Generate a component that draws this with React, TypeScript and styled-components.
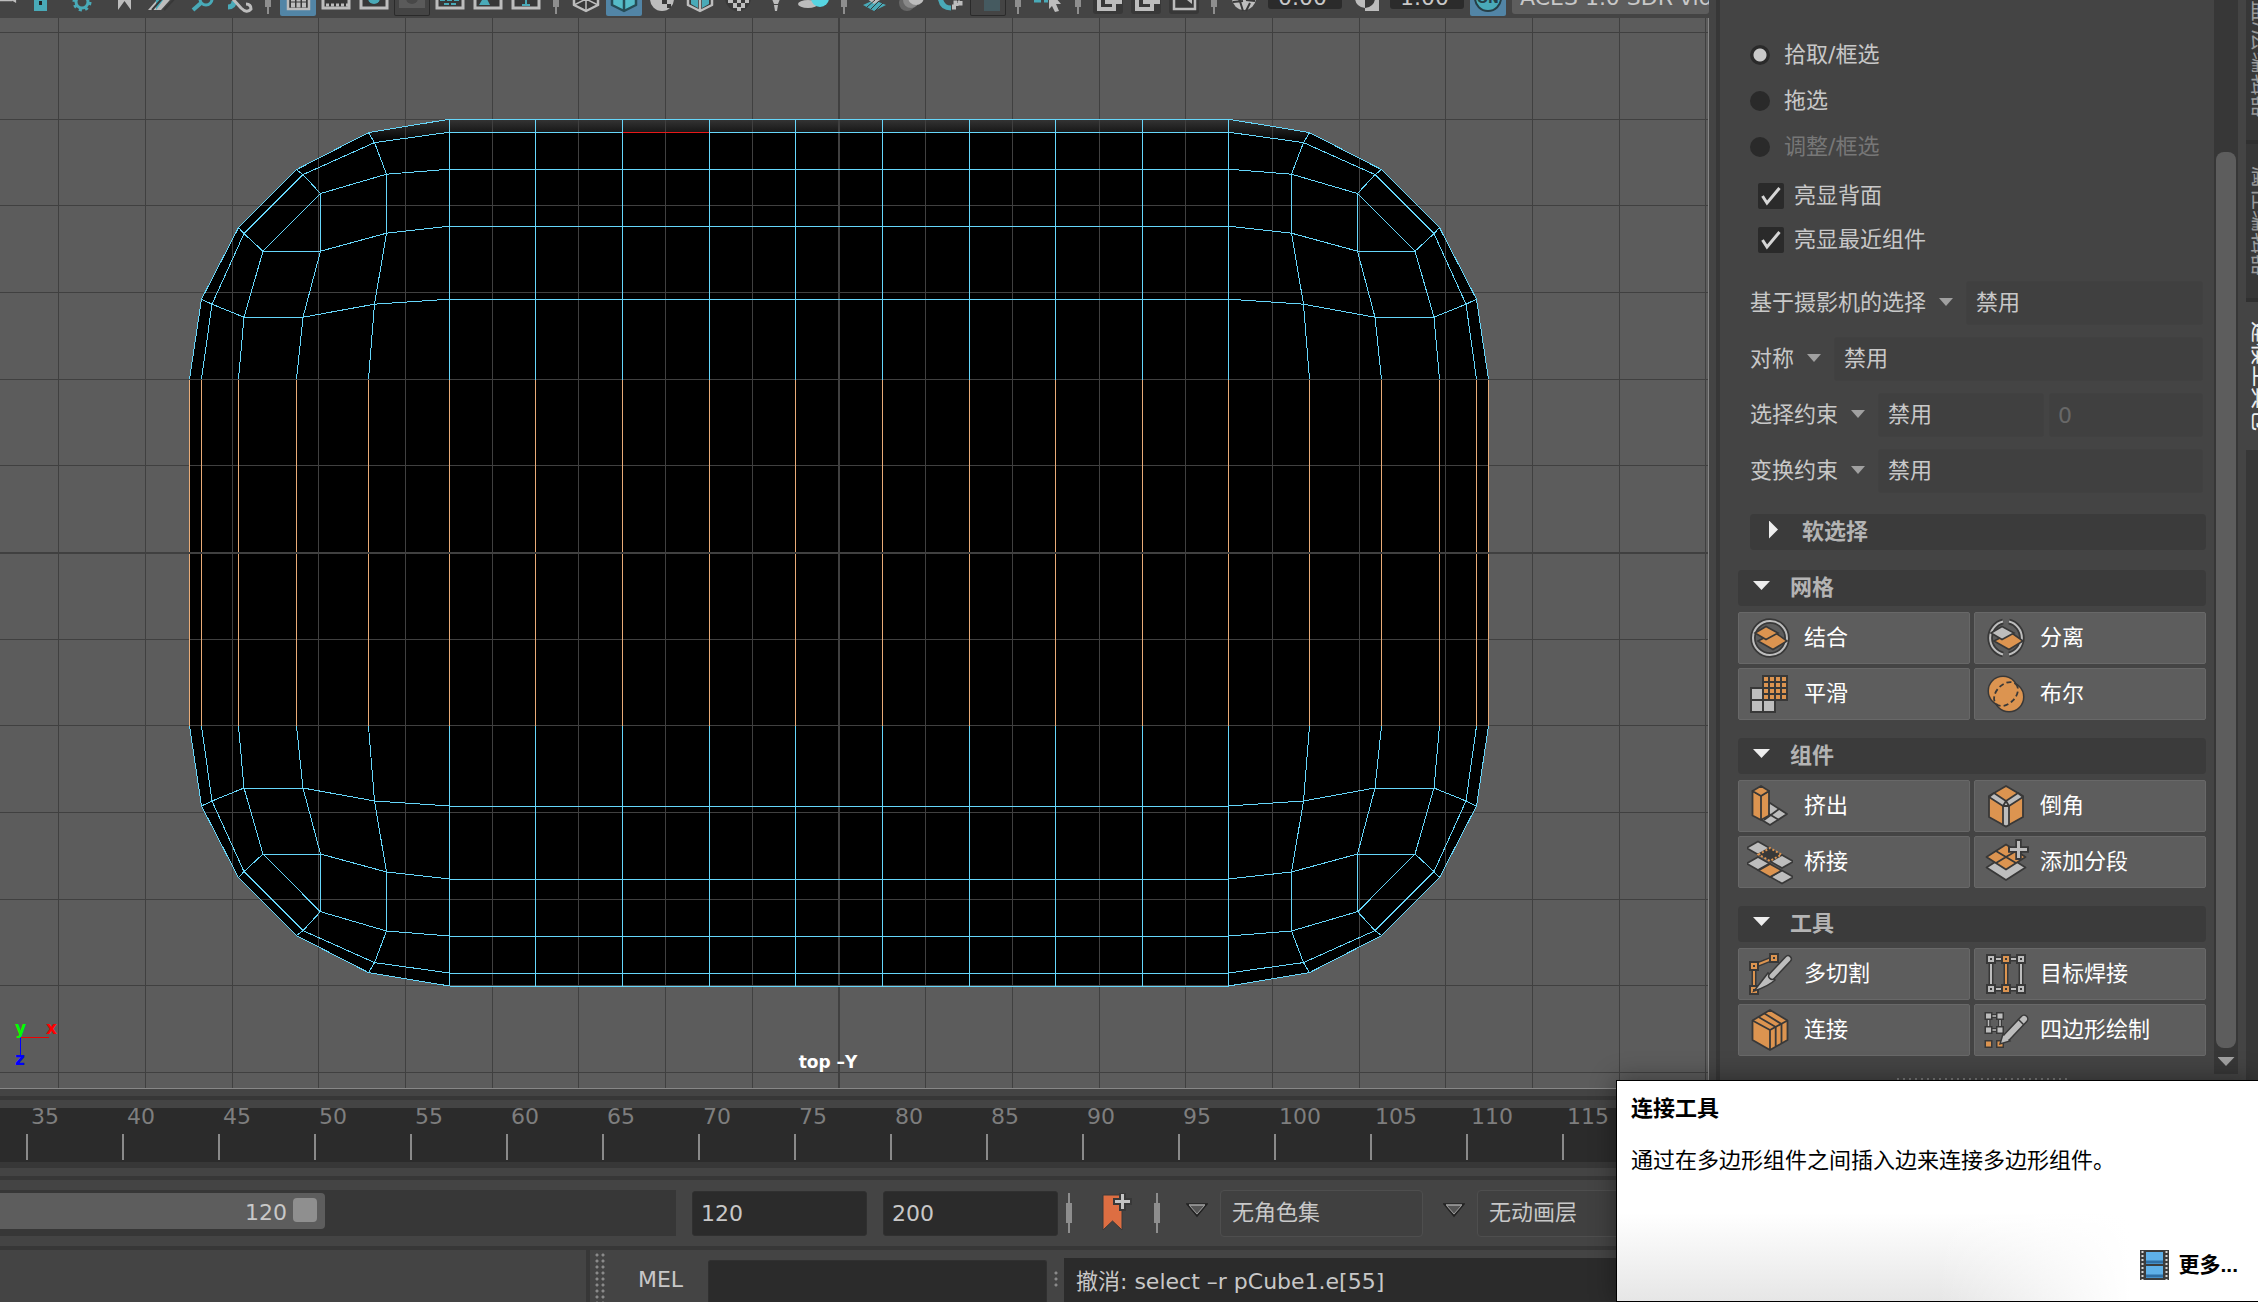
import React from "react";
import styled, { createGlobalStyle } from "styled-components";

const C = {
  panel: "#444444",
  groove: "#373737",
  well: "#2b2b2b",
  raised: "#5d5d5d",
  text: "#c8c8c8",
  teal: "#49aab8",
  blue: "#5285a6",
  light: "#bdbdbd",
  orange: "#dc9450",
  ink: "#383838",
};

const GlobalStyle = createGlobalStyle`
  * { box-sizing: border-box; }
  body { margin: 0; background: ${C.panel}; }
  body, button, input, select {
    font-family: "DejaVu Sans", "Noto Sans CJK SC", sans-serif;
    font-size: 22px;
    line-height: 28px;
    color: ${C.text};
  }
  button, input, select { margin: 0; padding: 0; border: 0; appearance: none; background: none; outline: none; }
`;

const Page = styled.div`
  position: relative;
  display: flex;
  flex-direction: column;
  height: 100vh;
  overflow: hidden;
`;
const Workspace = styled.div`
  display: flex;
  flex: 1;
  min-height: 0;
`;
const ViewColumn = styled.main`
  display: flex;
  flex-direction: column;
  flex: 1;
  min-width: 0;
  padding-bottom: 7px;
`;

/* ---------- viewport toolbar ---------- */
const Toolbar = styled.div`
  display: flex;
  align-items: flex-end;
  gap: 2px;
  height: 18px;
  padding-bottom: 2px;
  overflow: hidden;
  flex: none;
`;
const ToolButton = styled.button<{ $active?: boolean; $outlined?: boolean; $width?: number }>`
  display: flex;
  justify-content: center;
  flex: none;
  width: ${(p) => p.$width ?? 36}px;
  height: 36px;
  border-radius: 2px;
  background: ${(p) => (p.$active ? C.blue : "transparent")};
  box-shadow: ${(p) => (p.$outlined ? "inset 0 0 0 1px #2a2a2a" : "none")};
`;
const ToolIcon = styled.svg`
  display: block;
  width: 36px;
  height: 36px;
`;
const Divider = styled.span<{ $tall?: boolean }>`
  flex: none;
  align-self: ${(p) => (p.$tall ? "center" : "flex-end")};
  width: ${(p) => (p.$tall ? 6 : 20)}px;
  height: ${(p) => (p.$tall ? 40 : 34)}px;
  background:
    linear-gradient(#8e8e8e, #8e8e8e) center / 6px 20px no-repeat,
    linear-gradient(#8e8e8e, #8e8e8e) center / 2px 100% no-repeat;
`;
const ToolbarDivider = styled(Divider)`
  margin-bottom: 2px;
`;
const ToolField = styled.input`
  flex: none;
  width: 74px;
  height: 22px;
  margin: 0 4px 7px;
  padding: 0 0 0 10px;
  border-radius: 3px;
  background: ${C.well};
`;
const ToolSelect = styled.select`
  flex: 1;
  min-width: 0;
  height: 32px;
  margin: 0 0 2px 4px;
  padding: 0 0 0 8px;
  border-radius: 3px;
  background: ${C.raised};
`;

/* ---------- viewport ---------- */
const Viewport = styled.div`
  position: relative;
  flex: 1;
  min-height: 0;
  background: #5c5c5c;
  border-right: 1px solid #878787;
  border-bottom: 1px solid #878787;
`;
const Scene = styled.svg`
  display: block;
  width: 100%;
  height: 100%;
`;
const CameraName = styled.span`
  position: absolute;
  left: 0;
  right: 52px;
  bottom: 16px;
  text-align: center;
  font-size: 17px;
  line-height: 20px;
  font-weight: bold;
  color: #fff;
`;

/* ---------- modelling kit ---------- */
const Side = styled.aside`
  display: flex;
  flex: none;
  width: 549px;
`;
const Splitter = styled.div`
  width: 11px;
  border-right: 4px solid ${C.groove};
`;
const Kit = styled.div`
  flex: 1;
  min-width: 0;
  padding: 32px 8px 0 18px;
`;
const SelectionArea = styled.div`
  padding-left: 12px;
`;
const Choice = styled.label<{ $off?: boolean }>`
  display: flex;
  align-items: center;
  gap: 14px;
  height: 46px;
  color: ${(p) => (p.$off ? "#777777" : C.text)};
`;
const Radio = styled.input`
  width: 20px;
  height: 20px;
  border-radius: 50%;
  background: #2a2a2a;
  &:checked { background: radial-gradient(circle, #c8c8c8 6px, #2a2a2a 7px); }
`;
const Checks = styled.div`
  padding: 4px 0 19px 8px;
`;
const CheckLabel = styled.label`
  display: flex;
  align-items: center;
  gap: 10px;
  height: 44px;
`;
const CheckWrap = styled.span`
  display: grid;
  width: 26px;
  height: 26px;
  > * { grid-area: 1 / 1; }
`;
const Check = styled.input`
  width: 26px;
  height: 26px;
  border-radius: 2px;
  background: #2a2a2a;
`;
const Constraints = styled.div`
  display: flex;
  flex-direction: column;
  gap: 12px;
  padding-right: 3px;
`;
const Constraint = styled.div`
  display: flex;
  align-items: center;
  gap: 13px;
  height: 44px;
`;
const Fields = styled.div`
  display: flex;
  flex: 1;
  gap: 5px;
`;
const DownArrow = styled.span<{ $w: number; $h: number; $c: string; $lift?: number }>`
  flex: none;
  width: ${(p) => p.$w}px;
  height: ${(p) => p.$h}px;
  margin-bottom: ${(p) => p.$lift ?? 0}px;
  background: ${(p) => p.$c};
  clip-path: polygon(0 0, 100% 0, 50% 100%);
`;
const RightArrow = styled.span`
  width: 9px;
  height: 18px;
  margin: 0 4px 5px;
  background: #eeeeee;
  clip-path: polygon(0 0, 100% 50%, 0 100%);
`;
const FieldSelect = styled.select`
  flex: 1;
  min-width: 0;
  height: 44px;
  padding-left: 9px;
  border: 1px solid #414141;
  border-radius: 3px;
  background: #404040;
`;
const FieldNumber = styled.input`
  flex: none;
  width: 154px;
  height: 44px;
  padding-left: 8px;
  border: 1px solid #414141;
  border-radius: 3px;
  background: #404040;
  color: #686868;
`;
const Header = styled.button`
  display: flex;
  align-items: center;
  gap: 20px;
  width: 100%;
  height: 36px;
  padding-left: 15px;
  border-radius: 4px;
  background: #3b3b3b;
  color: #b4b4b4;
  font-weight: bold;
`;
const SoftHeader = styled.div`
  padding: 21px 0 20px;
`;
const Section = styled.section`
  margin-bottom: 18px;
`;
const Grid = styled.div`
  display: grid;
  grid-template-columns: 1fr 1fr;
  gap: 4px;
  margin-top: 6px;
`;
const KitButton = styled.button`
  display: flex;
  align-items: center;
  gap: 11px;
  height: 52px;
  padding-left: 8px;
  border: 1px solid #686868;
  border-radius: 2px;
  background: ${C.raised};
  color: #fff;
`;
const KitIcon = styled.svg`
  flex: none;
  width: 46px;
  height: 46px;
`;
const ResizeDots = styled.div`
  width: 170px;
  height: 2px;
  margin: 22px 0 0 159px;
  background: linear-gradient(to right, #777 2px, transparent 2px) 0 0 / 6px 2px;
`;
const ScrollTrack = styled.div`
  display: flex;
  flex-direction: column;
  align-items: center;
  flex: none;
  width: 24px;
  margin-bottom: 22px;
  padding: 152px 2px 8px;
  background: ${C.groove};
`;
const ScrollThumb = styled.div`
  flex: 1;
  width: 20px;
  margin-bottom: 9px;
  border-radius: 8px;
  background: ${C.raised};
`;
const Tabs = styled.nav`
  display: flex;
  flex-direction: column;
  flex: none;
  width: 12px;
  margin: -66px 0 0 8px;
  overflow: hidden;
  background: ${C.groove};
`;
const Tab = styled.button<{ $on?: boolean; $h: number }>`
  flex: none;
  width: 26px;
  height: ${(p) => p.$h}px;
  padding-left: 4px;
  border-bottom: 4px solid ${(p) => (p.$on ? C.groove : "#303030")};
  background: ${(p) => (p.$on ? C.panel : C.groove)};
  color: ${(p) => (p.$on ? "#eeeeee" : "#9a9a9a")};
  writing-mode: vertical-lr;
  text-orientation: sideways;
  line-height: 22px;
  white-space: nowrap;
`;

/* ---------- time controls ---------- */
const Bar = styled.div`
  flex: none;
  border-top: 4px solid ${C.groove};
`;
const TimeBar = styled(Bar)`
  padding: 8px 0;
`;
const Timeline = styled.ol`
  display: flex;
  height: 60px;
  margin: 0;
  padding: 0 0 0 26px;
  list-style: none;
  overflow: hidden;
  background: ${C.well};
  border-bottom: 6px solid ${C.groove};
`;
const Tick = styled.li`
  flex: none;
  width: 96px;
  padding-left: 5px;
  line-height: 18px;
  color: #7e7e7e;
  &::after {
    content: "";
    display: block;
    width: 2px;
    height: 26px;
    margin: 8px 0 0 -5px;
    background: #8a8a8a;
  }
`;
const RangeBar = styled(Bar)`
  display: flex;
  align-items: center;
  height: 70px;
`;
const RangeTrack = styled.div`
  flex: none;
  width: 676px;
  height: 46px;
  padding: 3px 0 7px;
  background: ${C.groove};
`;
const RangeThumb = styled.div`
  display: flex;
  align-items: center;
  justify-content: flex-end;
  gap: 6px;
  width: 325px;
  height: 36px;
  padding: 4px 8px 0 0;
  border-radius: 0 4px 4px 0;
  background: ${C.raised};
`;
const Grip = styled.span`
  width: 24px;
  height: 24px;
  margin-bottom: 6px;
  border-radius: 4px;
  background: #8f8f8f;
`;
const TimeInput = styled.input`
  flex: none;
  width: 175px;
  height: 45px;
  margin-left: 16px;
  padding-left: 8px;
  border-radius: 3px;
  border: 1px solid #303030;
  background: ${C.well};
`;
const BookmarkButton = styled.button`
  width: 36px;
  height: 40px;
  margin: 0 20px 0 26px;
`;
const Separated = styled.div`
  display: flex;
  align-items: center;
  padding-left: 8px;
`;
const SetPickers = styled.div`
  display: flex;
  gap: 20px;
  padding-left: 26px;
`;
const SetPicker = styled.div`
  display: flex;
  align-items: center;
  gap: 12px;
`;
const SetSelect = styled.select`
  width: 203px;
  height: 47px;
  padding-left: 11px;
  border: 1px solid #4e4e4e;
  border-radius: 4px;
  background: #404040;
`;

/* ---------- command line ---------- */
const CommandBar = styled(Bar)`
  display: flex;
  height: 56px;
`;
const HelpArea = styled.div`
  flex: none;
  width: 590px;
  border-right: 4px solid ${C.groove};
`;
const DragDots = styled.div`
  flex: none;
  width: 12px;
  margin: 2px 0 0 4px;
  background: radial-gradient(circle, #8a8a8a 1px, transparent 2px) 0 0 / 6px 6px;
`;
const Language = styled.button`
  flex: none;
  width: 102px;
  padding: 8px 0 0 7px;
`;
const CommandInput = styled.input`
  flex: none;
  width: 339px;
  margin-top: 10px;
  padding: 0 8px;
  border: 1px solid #303030;
  border-bottom: 0;
  border-radius: 3px 3px 0 0;
  background: ${C.well};
`;
const SmallDots = styled.div`
  flex: none;
  width: 6px;
  height: 18px;
  margin: 20px 5px 0 6px;
  background: radial-gradient(circle, #8a8a8a 1px, transparent 2px) 0 0 / 6px 6px;
`;
const Output = styled.output`
  flex: 1;
  margin-top: 8px;
  padding: 10px 12px;
  background: ${C.well};
  white-space: nowrap;
`;

/* ---------- tooltip ---------- */
const Tooltip = styled.div`
  position: absolute;
  right: 0;
  bottom: 0;
  display: flex;
  flex-direction: column;
  width: 642px;
  height: 222px;
  padding: 14px 20px 20px 14px;
  border: 1px solid #000;
  border-right: 0;
  background:
    linear-gradient(to right, transparent 50%, #fff 80%),
    linear-gradient(#fff 60%, #e6e6e6);
  box-shadow: 0 0 24px rgba(0, 0, 0, 0.4);
  color: #000;
`;
const TipTitle = styled.strong`
  font-weight: bold;
`;
const TipText = styled.p`
  margin: 24px 0 auto;
`;
const MoreLink = styled.a`
  display: flex;
  align-items: center;
  align-self: flex-end;
  gap: 9px;
  height: 32px;
  color: #000;
  font-family: "Liberation Sans", "Noto Sans CJK SC", sans-serif;
  font-size: 21px;
  font-weight: bold;
  text-decoration: none;
`;

/* ---------- scene drawing ---------- */
const CX = 839;
const CY = 552.6;
const STEP = 86.67;

// One quadrant of the rounded cube, as distances from its centre.
const quadrant: [number, number][][] = [
  [[389.5, 433.4], [470.5, 420], [542.5, 383], [600.5, 325], [637.5, 253.4], [649.5, 173.4]],
  [[389.5, 420.4], [464.5, 410], [536, 378], [595, 319], [627, 248.4], [637.5, 173.4]],
  [[389.5, 383.4], [452.5, 378.4], [518.8, 359], [576, 301.4], [595, 235.4], [600.5, 173.4]],
  [[389.5, 326.4], [452.5, 319.4], [518.5, 301.4], [576, 301.4]],
  [[518.5, 359], [518.5, 301.4], [536, 235.4], [542.5, 173.4]],
  [[389.5, 253.4], [464.5, 248.4], [536, 235.4], [595, 235.4], [627, 248.4], [637.5, 253.4]],
  [[470.5, 420], [464.5, 410], [452.5, 378.4], [452.5, 319.4], [464.5, 248.4], [470.5, 173.4]],
  [[542.5, 383], [536, 378], [518.5, 359]],
  [[600.5, 325], [595, 319], [576, 301.4]],
];
const quads: [number, number][] = [[1, 1], [-1, 1], [1, -1], [-1, -1]];
const pt = (x: number, y: number) => `${CX + x},${CY + y}`;
const line = (pts: [number, number][], sx: number, sy: number) =>
  pts.map(([x, y]) => pt(x * sx, y * sy)).join(" ");
const rim = quadrant[0];
const outline = [
  ...rim.map(([x, y]) => pt(x, -y)),
  ...[...rim].reverse().map(([x, y]) => pt(x, y)),
  ...rim.map(([x, y]) => pt(-x, y)),
  ...[...rim].reverse().map(([x, y]) => pt(-x, -y)),
].join(" ");
const columns = [389.5, 303.3, 216.5, 130, 43.3].flatMap((d) => [CX - d, CX + d]);
const picked = [649.5, 637.5, 600.5, 542.5, 470.5].flatMap((d) => [CX - d, CX + d]).concat(columns);
const rows = [433.4, 420.4, 383.4, 326.4, 253.4].flatMap((d) => [CY - d, CY + d]);

function SceneView() {
  return (
    <Scene viewBox="0 18 1708 1070" preserveAspectRatio="xMinYMin slice" role="img" aria-label="top -Y">
      <defs>
        <linearGradient id="rim" x1="0" y1="0" x2="0" y2="1">
          <stop offset="0" stopColor="#343434" />
          <stop offset="1" stopColor="#000" />
        </linearGradient>
      </defs>
      <polygon points={outline} fill="#000" />
      <polygon
        points={`${pt(-390, -433)} ${pt(390, -433)} ${pt(470, -420)} ${pt(464, -410)} ${pt(390, -420)} ${pt(-390, -420)} ${pt(-464, -410)} ${pt(-470, -420)}`}
        fill="url(#rim)"
      />
      <g stroke="#404040" shapeRendering="crispEdges">
        {Array.from({ length: 21 }, (_, i) => i - 10).map((n) => (
          <line key={n} x1={CX + n * STEP} x2={CX + n * STEP} y1="0" y2="1100" strokeWidth={n ? 1 : 2} />
        ))}
        {Array.from({ length: 13 }, (_, i) => i - 6).map((n) => (
          <line key={n} y1={CY + n * STEP} y2={CY + n * STEP} x1="0" x2="1708" strokeWidth={n ? 1 : 2} />
        ))}
      </g>
      <g stroke="#66d6fa" fill="none" shapeRendering="crispEdges">
        {quads.flatMap(([sx, sy]) =>
          quadrant.map((p, i) => <polyline key={`${sx}${sy}${i}`} points={line(p, sx, sy)} />),
        )}
        {rows.map((y) => <line key={y} x1={CX - 389.5} x2={CX + 389.5} y1={y} y2={y} />)}
        {columns.map((x) => (
          <path key={x} d={`M${x} ${CY - 433}V${CY - 173}M${x} ${CY + 173}V${CY + 433}`} />
        ))}
      </g>
      <g stroke="#e9ac78" shapeRendering="crispEdges">
        {picked.map((x) => <line key={x} x1={x} x2={x} y1={CY - 173} y2={CY + 173} />)}
      </g>
      <path d={`M${CX - 216} ${CY - 420.4}h86`} stroke="#e81818" shapeRendering="crispEdges" />
      <path d={`M${CX - 650} ${CY}H${CX + 650}`} stroke="#404040" strokeWidth="2" shapeRendering="crispEdges" />
      <path d="M20 1037.500H49" stroke="#f00000" />
      <path d="M20.500 1037V1057" stroke="#0000ff" />
      <g fontSize="17" fontWeight="bold">
        <text x="15" y="1034" fill="#00ff00">y</text>
        <text x="46" y="1034" fill="#ff0000">x</text>
        <text x="15" y="1065" fill="#0000ff">z</text>
      </g>
    </Scene>
  );
}

/* ---------- toolbar icons, lower halves are what shows ---------- */
const frame = <rect x="5" y="8" width="26" height="20" fill={C.ink} stroke={C.light} strokeWidth="3" />;
const cube = (fill: string, edge: string) => (
  <g fill={fill} stroke={edge} strokeWidth="2.500" strokeLinejoin="round">
    <path d="M18 6L30 12V25L18 31L6 25V12Z" />
    <path d="M18 18V31M18 18L6 12M18 18L30 12" fill="none" />
  </g>
);
const toolIcons: Record<string, React.ReactNode> = {
  camera: <path d="M0 10H22V20L29 17V27L22 23V24H0Z" fill={C.light} />,
  lock: <g><rect x="12" y="17" width="13" height="14" fill={C.teal} /><path d="M17 21h3v4h-3z" fill="#222" /></g>,
  gear: <g fill="none" stroke={C.teal}><circle cx="18" cy="22" r="6" strokeWidth="3" /><circle cx="18" cy="22" r="8" strokeWidth="3" strokeDasharray="3 3.300" /></g>,
  bookmark: <path d="M12 6H25V30L18.500 21L12 30Z" fill={C.light} />,
  image: <g><path d="M4 30L20 12H33L17 30Z" fill={C.light} /><path d="M12 30V18L22 16Z" fill={C.teal} /><path d="M8 30L22 14M20 30L32 17" stroke={C.ink} strokeWidth="2" /></g>,
  search: <g fill="none" stroke={C.teal} strokeWidth="3"><circle cx="24" cy="19" r="6" /><path d="M19 23L11 30" strokeWidth="4" /></g>,
  pencil: <g fill="none" stroke={C.light} strokeWidth="3"><path d="M8 27q6 0 6-6" stroke={C.teal} strokeWidth="5" /><path d="M12 18L21 28q6 6 10 1q0-5-5-5" /></g>,
  grid: <g><rect x="8" y="8" width="21" height="21" fill={C.ink} stroke={C.light} strokeWidth="2.500" /><path d="M11 25h15M11 19h15" stroke={C.light} strokeWidth="5" strokeDasharray="4 1.500" /></g>,
  film: <g><rect x="5" y="8" width="26" height="20" fill={C.ink} stroke={C.light} strokeWidth="3" /><path d="M8 25h22" stroke={C.light} strokeWidth="3" strokeDasharray="3 2" /></g>,
  mask: <g>{frame}<circle cx="18" cy="18" r="6" fill={C.teal} /></g>,
  maskOff: <g><rect x="5" y="8" width="26" height="20" fill="#5a5a5a" /><circle cx="18" cy="18" r="6" fill="#484848" /></g>,
  chart: <g>{frame}<path d="M8 20h20M12 24h12" stroke={C.teal} strokeWidth="2" strokeDasharray="5 2" /></g>,
  safe: <g>{frame}<path d="M9 25L15 15L20 25Z" fill={C.teal} /></g>,
  title: <g>{frame}<path d="M18 12V25M14 25h8" stroke={C.teal} strokeWidth="2" /></g>,
  wire: (
    <g fill="none" stroke={C.light} strokeWidth="2.500" strokeLinejoin="round">
      <path d="M18 6L30 12V25L18 31L6 25V12Z" fill={C.ink} />
      <path d="M18 8V21M6 25L18 19L30 25M18 19V31" strokeWidth="1.500" />
    </g>
  ),
  solid: cube("#55bcc8", "#264d57"),
  ball: <g><circle cx="18" cy="19" r="12" fill={C.light} /><path d="M18 19h5v5h-5zM23 15h5v4h-5zM23 24h4v4h-4z" fill={C.ink} /></g>,
  cubeTeal: (
    <g>
      {cube(C.ink, C.light)}
      <path d="M9 16L16 20V28L9 24ZM27 16L20 20V28L27 24Z" fill={C.teal} />
    </g>
  ),
  checker: <g><circle cx="18" cy="18" r="13" fill={C.ink} /><path d="M8 19h5v4H8zM17 19h4v4h-4zM25 19h4v4h-4zM13 23h4v5h-4zM21 23h4v5h-4zM17 27h4v4h-4z" fill={C.light} /></g>,
  bulb: <path d="M14 19h8l-2 5h-4zM16 25h4l-1 6h-2z" fill={C.light} />,
  shadow: <g><ellipse cx="12" cy="24" rx="10" ry="4" fill={C.light} /><circle cx="24" cy="18" r="9" fill="#57d5e2" /></g>,
  ao: (
    <g>
      <path d="M7 25L18 20L30 25L18 31Z" fill={C.teal} />
      <path d="M10 18L18 13L27 18L18 24Z" fill={C.light} />
      <path d="M11 27L19 20M15 29L23 21M19 31L27 23" stroke={C.ink} />
    </g>
  ),
  blur: <g><circle cx="13" cy="23" r="8" fill="#666" /><circle cx="17" cy="20" r="8" fill="#888" /><circle cx="22" cy="17" r="8" fill={C.light} /></g>,
  alias: <g fill="none" strokeWidth="5"><path d="M8 14Q8 28 19 28" stroke={C.teal} /><path d="M20 27h4v-4h4v-6" stroke={C.light} strokeDasharray="4 1" /></g>,
  dim: <rect x="14" y="10" width="16" height="21" fill="#455a60" />,
  cursor: <g><path d="M4 21H18" stroke={C.teal} strokeWidth="3" strokeDasharray="7 3" /><path d="M19 10L31 24L26 24L29 31L25 32L22 26L19 29Z" fill={C.light} /></g>,
  layers: <g><rect x="3" y="4" width="30" height="30" rx="3" fill={C.ink} /><path d="M9 12H19M9 12V29H24V22M15 22H30V8" fill="none" stroke={C.light} strokeWidth="4" /></g>,
  resize: <g><rect x="3" y="4" width="30" height="30" rx="3" fill={C.ink} /><rect x="8" y="8" width="21" height="21" fill="none" stroke={C.light} strokeWidth="2.500" /><path d="M16 16L26 24V16Z" fill={C.light} /></g>,
  aperture: <g><circle cx="18" cy="18" r="12" fill={C.light} /><path d="M13 18L17 31M7 22L17 21M20 20L29 21M20 31L24 23" stroke={C.ink} strokeWidth="2" /></g>,
  gamma: <g><rect x="17" y="10" width="14" height="21" fill={C.light} /><circle cx="17" cy="18" r="10" fill={C.ink} /><path d="M17 8A10 10 0 0 0 17 28Z" fill={C.light} /></g>,
};
const Tool = ({ name, ...rest }: { name: string; $active?: boolean; $outlined?: boolean; $width?: number }) => (
  <ToolButton type="button" aria-label={name} {...rest}>
    <ToolIcon viewBox="0 0 36 36">{toolIcons[name]}</ToolIcon>
  </ToolButton>
);

/* ---------- kit icons ---------- */
const diamond = (x: number, y: number, fill: string, dash?: boolean) => (
  <path
    key={`${x}-${y}`}
    d={`M${x - 11.5} ${y}L${x} ${y - 6.5}L${x + 11.5} ${y}L${x} ${y + 6.5}Z`}
    fill={fill}
    stroke={dash ? C.orange : C.ink}
    strokeWidth={dash ? 2 : 1.6}
    strokeDasharray={dash ? "2 2" : undefined}
  />
);
const node = (x: number, y: number, fill: string) => (
  <g key={`${x}-${y}`}>
    <rect x={x - 5} y={y - 5} width="10" height="10" fill={C.ink} />
    <rect x={x - 2} y={y - 2} width="4" height="4" fill="none" stroke={fill} strokeWidth="2" />
  </g>
);
const dot = (x: number, y: number, fill: string) => (
  <g key={`${x}-${y}`}>
    <rect x={x - 4} y={y - 4} width="8" height="8" fill={C.ink} />
    <rect x={x - 2.5} y={y - 2.5} width="5" height="5" fill={fill} />
  </g>
);
const sheets = (top: string) => (
  <g stroke={C.ink} strokeWidth="1.600">
    <path d="M11 26L28 17.500L40 26L26 34.500Z" fill={C.orange} />
    <path d="M8 18L19 11.500L31 18L19 24.500Z" fill={top} />
  </g>
);
const kitIcons: Record<string, React.ReactNode> = {
  结合: (
    <g>
      <circle cx="23" cy="23" r="17" fill="none" stroke={C.ink} strokeWidth="5.500" />
      <circle cx="23" cy="23" r="17" fill="none" stroke={C.light} strokeWidth="2" />
      {sheets(C.orange)}
    </g>
  ),
  分离: (
    <g>
      <path d="M20 6.500A17 17 0 0 0 20 39.500M26 6.500A17 17 0 0 1 26 39.500" fill="none" stroke={C.ink} strokeWidth="5.500" />
      <path d="M20 6.500A17 17 0 0 0 20 39.500M26 6.500A17 17 0 0 1 26 39.500" fill="none" stroke={C.light} strokeWidth="2" />
      {sheets(C.light)}
    </g>
  ),
  平滑: (
    <g>
      <path d="M3 16H15V4H41V30H29V42H3Z" fill={C.ink} />
      <path d="M5 18h10v10H5zM5 30h10v10H5zM17 30h10v10H17z" fill={C.light} />
      {[0, 1, 2, 3].flatMap((r) => [0, 1, 2, 3].map((c) => (
        <rect key={`${r}${c}`} x={17 + c * 6} y={6 + r * 6} width="4" height="4" fill={C.orange} />
      )))}
    </g>
  ),
  布尔: (
    <g>
      <circle cx="20" cy="20" r="15.500" fill={C.ink} /><circle cx="26" cy="26" r="15.500" fill={C.ink} />
      <circle cx="20" cy="20" r="14" fill={C.orange} /><circle cx="26" cy="26" r="14" fill={C.orange} />
      <ellipse cx="23" cy="23" rx="14" ry="9.500" transform="rotate(-45 23 23)" fill="none" stroke={C.ink} strokeWidth="1.800" strokeDasharray="5 3" />
    </g>
  ),
  挤出: (
    <g stroke={C.ink} strokeWidth="1.800" strokeLinejoin="round">
      <path d="M23 20L40 31L23 42L10 34Z" fill={C.light} />
      <path d="M17 37L32 26M17 28L32 37" />
      <path d="M5.500 8V32.500L14 37L22 32.500V8L14 12.500Z" fill={C.orange} />
      <path d="M14 3L22 8L14 13L5.500 8Z" fill={C.orange} />
      <path d="M14 13V37" />
    </g>
  ),
  倒角: (
    <g stroke={C.ink} strokeWidth="1.800" strokeLinejoin="round">
      <path d="M23 3L40 13V34L23 43.500L6 34V13Z" fill={C.orange} />
      <path d="M6 14L11 10L23 18L35 10L40 14L26 23V42L23 43.500L20 42V23Z" fill={C.light} />
      <path d="M20 23L23 18L26 23Z" fill={C.light} />
    </g>
  ),
  桥接: (
    <g>
      {diamond(11, 9, C.light)}{diamond(35, 22.5, C.light)}
      {diamond(23, 15.5, C.ink, true)}
      {diamond(11, 24.5, C.light)}{diamond(35, 38, C.light)}{diamond(23, 31.5, C.orange)}
    </g>
  ),
  添加分段: (
    <g>
      <g stroke={C.ink} strokeWidth="1.800" strokeLinejoin="round">
        <path d="M3.500 28.500L23 16L42.500 28.500L23 41Z" fill={C.light} />
        <path d="M3.500 18L23 5.500L42.500 18L23 30.500Z" fill={C.orange} />
        <path d="M13 12L33 24M33 12L13 24" />
      </g>
      <path d="M35.500 0V21M25 10.500H46" stroke={C.ink} strokeWidth="6.500" />
      <path d="M35.500 2V19M27 10.500H44" stroke={C.light} strokeWidth="3" />
    </g>
  ),
  多切割: (
    <g>
      <path d="M7 39V15L27 7" fill="none" stroke={C.ink} strokeWidth="5" />
      <path d="M7 39V15L27 7" fill="none" stroke={C.orange} strokeWidth="2" />
      {node(27, 7, C.orange)}{node(7, 15, C.orange)}{node(7, 39, C.orange)}
      <path d="M7 40L21 22L28 29Q22 35 7 40Z" fill={C.light} stroke={C.ink} strokeWidth="1.500" />
      <path d="M25 25L41 8" stroke={C.ink} strokeWidth="8" strokeLinecap="round" />
      <path d="M25 25L41 8" stroke={C.light} strokeWidth="5" strokeLinecap="round" />
    </g>
  ),
  目标焊接: (
    <g>
      <path d="M8 8H38V38H8ZM23 8V38" fill="none" stroke={C.ink} strokeWidth="5" />
      <path d="M8 8H38V38H8Z" fill="none" stroke={C.light} strokeWidth="2" />
      <path d="M23 8V38" stroke={C.orange} strokeWidth="2" />
      {[8, 38].flatMap((y) => [node(8, y, C.light), node(23, y, C.orange), node(38, y, C.light)])}
    </g>
  ),
  连接: (
    <g stroke={C.ink} strokeWidth="1.800" strokeLinejoin="round">
      <path d="M23 3L40.500 13.500V33L23 43L5.500 33V13.500Z" fill={C.orange} />
      <path d="M5.500 13.500L23 23V43M23 23L40.500 13.500" fill="none" />
      <path d="M11.500 10L28.700 20V39.500M17.500 6.500L34.500 17V36" fill="none" />
    </g>
  ),
  四边形绘制: (
    <g>
      <path d="M5.500 9H17V23H5.500Z" fill="none" stroke={C.ink} strokeWidth="4" />
      <path d="M5.500 9H17V23H5.500Z" fill="none" stroke={C.light} strokeWidth="1.500" />
      {dot(5.5, 9, C.light)}{dot(17, 9, C.light)}{dot(5.5, 23, C.light)}{dot(17, 23, C.light)}
      {dot(5.5, 37, C.orange)}{dot(17, 37, C.orange)}
      <path d="M24 30L41 12" stroke={C.ink} strokeWidth="9" strokeLinecap="round" />
      <path d="M17 37L20 27L27 34Z" fill={C.light} stroke={C.ink} strokeWidth="1.500" />
      <path d="M24 30L41 12" stroke={C.light} strokeWidth="6" strokeLinecap="round" />
      <path d="M35 12L41 18" stroke={C.ink} strokeWidth="1.500" />
    </g>
  ),
};

const sections = [
  { title: "网格", tools: ["结合", "分离", "平滑", "布尔"] },
  { title: "组件", tools: ["挤出", "倒角", "桥接", "添加分段"] },
  { title: "工具", tools: ["多切割", "目标焊接", "连接", "四边形绘制"] },
];
const constraints = [
  { id: "camera", label: "基于摄影机的选择" },
  { id: "symmetry", label: "对称" },
  { id: "select", label: "选择约束", amount: "0" },
  { id: "transform", label: "变换约束" },
];
const frames = Array.from({ length: 17 }, (_, i) => 35 + i * 5);

function CheckItem({ label }: { label: string }) {
  return (
    <CheckLabel>
      <CheckWrap>
        <Check type="checkbox" defaultChecked />
        <svg width="26" height="26" viewBox="0 0 26 26">
          <path d="M4.500 13L9 20L21.500 5" fill="none" stroke="#d6d6d6" strokeWidth="3" />
        </svg>
      </CheckWrap>
      {label}
    </CheckLabel>
  );
}

function SetArrow() {
  return (
    <svg width="22" height="20" viewBox="0 0 22 20">
      <path d="M1 1H21L11 13Z" fill="#555" stroke="#222" strokeWidth="1.500" />
      <path d="M3 2H19" stroke="#a5a5a5" strokeWidth="1.500" />
      <path d="M4 3L11 11L18 3" fill="none" stroke="#999" />
    </svg>
  );
}

export default function App() {
  return (
    <Page>
      <GlobalStyle />
      <Workspace>
        <ViewColumn>
          <Toolbar>
            <Tool name="camera" $width={20} />
            <Tool name="lock" />
            <Tool name="gear" $width={44} />
            <Tool name="bookmark" />
            <Tool name="image" />
            <Tool name="search" />
            <Tool name="pencil" />
            <ToolbarDivider />
            <Tool name="grid" $active />
            <Tool name="film" />
            <Tool name="mask" />
            <Tool name="maskOff" $outlined />
            <Tool name="chart" />
            <Tool name="safe" />
            <Tool name="title" />
            <ToolbarDivider />
            <Tool name="wire" />
            <Tool name="solid" $active />
            <Tool name="ball" />
            <Tool name="cubeTeal" />
            <Tool name="checker" />
            <Tool name="bulb" />
            <Tool name="shadow" />
            <ToolbarDivider />
            <Tool name="ao" />
            <Tool name="blur" />
            <Tool name="alias" />
            <Tool name="dim" $outlined />
            <ToolbarDivider />
            <Tool name="cursor" />
            <ToolbarDivider />
            <Tool name="layers" />
            <Tool name="layers" />
            <Tool name="resize" />
            <ToolbarDivider />
            <Tool name="aperture" />
            <ToolField aria-label="exposure" defaultValue="0.00" />
            <Tool name="gamma" />
            <ToolField aria-label="gamma value" defaultValue="1.00" />
            <ToolButton type="button" $active aria-label="view transform">
              <ToolIcon viewBox="0 0 36 36">
                <circle cx="18" cy="18" r="13" fill={C.teal} stroke="#263f46" strokeWidth="2" />
                <text x="18" y="23" fontSize="13" fontWeight="bold" textAnchor="middle" fill="#263f46">ON</text>
              </ToolIcon>
            </ToolButton>
            <ToolSelect aria-label="view transform name">
              <option>ACES 1.0 SDR-video</option>
            </ToolSelect>
          </Toolbar>
          <Viewport>
            <SceneView />
            <CameraName>top –Y</CameraName>
          </Viewport>
        </ViewColumn>

        <Side>
          <Splitter />
          <Kit>
            <SelectionArea>
              <Choice><Radio type="radio" name="mode" defaultChecked />拾取/框选</Choice>
              <Choice><Radio type="radio" name="mode" />拖选</Choice>
              <Choice $off><Radio type="radio" name="mode" disabled />调整/框选</Choice>
              <Checks>
                <CheckItem label="亮显背面" />
                <CheckItem label="亮显最近组件" />
              </Checks>
              <Constraints>
                {constraints.map((c) => (
                  <Constraint key={c.id}>
                    <label htmlFor={c.id}>{c.label}</label>
                    <DownArrow $w={14} $h={8} $c="#a0a0a0" $lift={2} />
                    <Fields>
                      <FieldSelect id={c.id}><option>禁用</option></FieldSelect>
                      {c.amount && <FieldNumber aria-label="角度" defaultValue={c.amount} disabled />}
                    </Fields>
                  </Constraint>
                ))}
              </Constraints>
              <SoftHeader>
                <Header type="button"><RightArrow />软选择</Header>
              </SoftHeader>
            </SelectionArea>
            {sections.map((s) => (
              <Section key={s.title}>
                <Header type="button"><DownArrow $w={17} $h={9} $c="#eeeeee" $lift={5} />{s.title}</Header>
                <Grid>
                  {s.tools.map((t) => (
                    <KitButton type="button" key={t}>
                      <KitIcon viewBox="0 0 46 46">{kitIcons[t]}</KitIcon>
                      {t}
                    </KitButton>
                  ))}
                </Grid>
              </Section>
            ))}
            <ResizeDots />
          </Kit>
          <ScrollTrack>
            <ScrollThumb />
            <DownArrow $w={17} $h={9} $c="#a0a0a0" />
          </ScrollTrack>
          <Tabs>
            <Tab type="button" $h={210}>通道盒/层编辑器</Tab>
            <Tab type="button" $h={158}>属性编辑器</Tab>
            <Tab type="button" $h={152} $on>建模工具包</Tab>
          </Tabs>
        </Side>
      </Workspace>

      <TimeBar>
        <Timeline>
          {frames.map((f) => <Tick key={f}>{f}</Tick>)}
        </Timeline>
      </TimeBar>

      <RangeBar>
        <RangeTrack>
          <RangeThumb>120<Grip /></RangeThumb>
        </RangeTrack>
        <TimeInput aria-label="playback end" defaultValue="120" />
        <TimeInput aria-label="animation end" defaultValue="200" />
        <Separated>
          <Divider $tall />
          <BookmarkButton type="button" aria-label="bookmark">
            <svg width="36" height="40" viewBox="0 0 36 40">
              <path d="M5 2H24V37L14.500 28L5 37Z" fill="#dd6e42" stroke="#383838" />
              <path d="M24.500 0V18M15 8.500H34" stroke="#383838" strokeWidth="7" />
              <path d="M24.500 1V16M17 8.500H32" stroke="#c4c4c4" strokeWidth="3" />
            </svg>
          </BookmarkButton>
          <Divider $tall />
        </Separated>
        <SetPickers>
          <SetPicker>
            <SetArrow />
            <SetSelect aria-label="角色集"><option>无角色集</option></SetSelect>
          </SetPicker>
          <SetPicker>
            <SetArrow />
            <SetSelect aria-label="动画层"><option>无动画层</option></SetSelect>
          </SetPicker>
        </SetPickers>
      </RangeBar>

      <CommandBar>
        <HelpArea />
        <DragDots />
        <Language type="button">MEL</Language>
        <CommandInput aria-label="MEL" />
        <SmallDots />
        <Output>撤消: select –r pCube1.e[55]</Output>
      </CommandBar>

      <Tooltip role="tooltip">
        <TipTitle>连接工具</TipTitle>
        <TipText>通过在多边形组件之间插入边来连接多边形组件。</TipText>
        <MoreLink href="#more">
          <svg width="29" height="30" viewBox="0 0 29 30">
            <rect width="29" height="30" fill="#3c3c3c" />
            <path d="M2.500 1V30M26.500 1V30" stroke="#d8d8d8" strokeWidth="2" strokeDasharray="2 2" />
            <rect x="6" y="2" width="17" height="12" fill="#5fb0e8" />
            <rect x="6" y="16" width="17" height="12" fill="#5fb0e8" />
            <path d="M6 12h17M6 26h17" stroke="#2f6fa5" strokeWidth="3" />
          </svg>
          更多...
        </MoreLink>
      </Tooltip>
    </Page>
  );
}
